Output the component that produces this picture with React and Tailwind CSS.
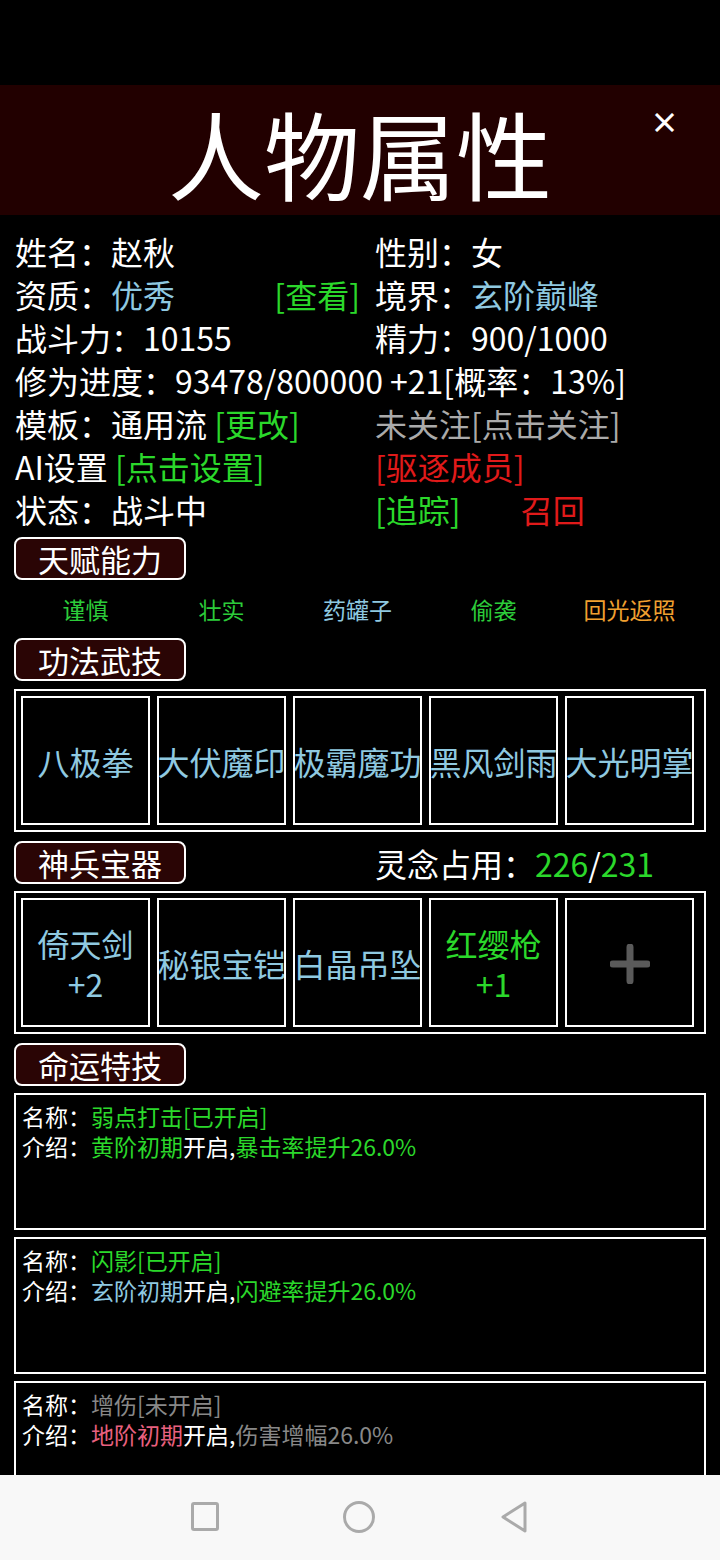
import React from 'react';

const font = { fontFamily: '"Noto Sans CJK SC", "Noto Sans", sans-serif' };

const G = 'text-[#2bd82b]';
const B = 'text-[#8fc9e0]';

function Tag({ children }) {
  return (
    <div className="w-[172px] h-[43px] rounded-[8px] border-2 border-white bg-[#2a0505] flex items-center justify-center text-[31px] leading-none text-white">
      {children}
    </div>
  );
}

function Cell({ children, className = '' }) {
  return (
    <div className={`h-[129px] border-2 border-white flex flex-col items-center justify-center text-[32px] leading-[40px] whitespace-nowrap overflow-hidden ${className}`}>
      {children}
    </div>
  );
}

function Box({ children }) {
  return (
    <div className="mx-[14px] border-2 border-white p-[5px] grid grid-cols-[repeat(5,129px)] gap-[7px]">
      {children}
    </div>
  );
}

function Card({ name, intro }) {
  return (
    <div className="mx-[14px] h-[137px] shrink-0 border-2 border-white pt-[6px] pl-[6px] text-[23px] leading-[30px] text-white">
      <div>名称：{name}</div>
      <div>介绍：{intro}</div>
    </div>
  );
}

export default function App() {
  return (
    <div className="w-[720px] h-[1560px] bg-black flex flex-col overflow-hidden" style={font}>
      <div className="flex-1 min-h-0 overflow-hidden">
        <div className="h-[85px]" />
        <div className="relative h-[130px] bg-[#220000] flex items-center justify-center">
          <span className="text-[96px] leading-none text-white pt-[4px]">人物属性</span>
          <span className="absolute left-[650px] top-[22px] text-[29px] font-bold leading-none text-white">×</span>
        </div>

        <div className="pt-[15px] px-[15px] grid grid-cols-[345px_1fr] gap-x-[15px] text-[32px] leading-[43px] text-white whitespace-nowrap">
          <div>姓名：赵秋</div>
          <div>性别：女</div>
          <div className="flex justify-between">
            <span>资质：<span className={B}>优秀</span></span>
            <span className={G}>[查看]</span>
          </div>
          <div>境界：<span className={B}>玄阶巅峰</span></div>
          <div>战斗力：10155</div>
          <div>精力：900/1000</div>
          <div className="col-span-2">修为进度：93478/800000 +21[概率：13%]</div>
          <div>模板：通用流 <span className={G}>[更改]</span></div>
          <div className="text-[#aaaaaa]">未关注[点击关注]</div>
          <div>AI设置 <span className={G}>[点击设置]</span></div>
          <div className="text-[#e01a1a]">[驱逐成员]</div>
          <div>状态：战斗中</div>
          <div>
            <span className={G}>[追踪]</span>
            <span className="ml-[60px] text-[#e01a1a]">召回</span>
          </div>
        </div>

        <div className="mt-[6px] px-[14px]">
          <Tag>天赋能力</Tag>
        </div>
        <div className="h-[58px] mx-[14px] px-[7px] grid grid-cols-[repeat(5,129px)] gap-[7px] items-center text-center text-[23px]">
          <span className="text-[#2ccc3a]">谨慎</span>
          <span className="text-[#2ccc3a]">壮实</span>
          <span className={B}>药罐子</span>
          <span className="text-[#2ccc3a]">偷袭</span>
          <span className="text-[#f0a030]">回光返照</span>
        </div>
        <div className="px-[14px]">
          <Tag>功法武技</Tag>
        </div>

        <div className="mt-[8px]">
          <Box>
            <Cell className={B}>八极拳</Cell>
            <Cell className={B}>大伏魔印</Cell>
            <Cell className={B}>极霸魔功</Cell>
            <Cell className={B}>黑风剑雨</Cell>
            <Cell className={B}>大光明掌</Cell>
          </Box>
        </div>

        <div className="mt-[9px] px-[14px] flex items-center">
          <Tag>神兵宝器</Tag>
          <div className="ml-[189px] text-[32px] leading-none text-white">
            灵念占用：<span className={G}>226</span>/<span className={G}>231</span>
          </div>
        </div>

        <div className="mt-[7px]">
          <Box>
            <Cell className={B}>
              <span>倚天剑</span>
              <span>+2</span>
            </Cell>
            <Cell className={B}>秘银宝铠</Cell>
            <Cell className={B}>白晶吊坠</Cell>
            <Cell className={G}>
              <span>红缨枪</span>
              <span>+1</span>
            </Cell>
            <Cell>
              <svg width="40" height="40" viewBox="0 0 40 40" className="mt-[2px]">
                <path d="M20 3 V37 M3 20 H37" stroke="#5a5a5a" strokeWidth="7" strokeLinecap="round" />
              </svg>
            </Cell>
          </Box>
        </div>

        <div className="mt-[9px] px-[14px]">
          <Tag>命运特技</Tag>
        </div>

        <div className="mt-[7px] flex flex-col gap-[7px]">
          <Card
            name={<span className={G}>弱点打击[已开启]</span>}
            intro={<><span className={G}>黄阶初期</span>开启,<span className={G}>暴击率提升26.0%</span></>}
          />
          <Card
            name={<span className={G}>闪影[已开启]</span>}
            intro={<><span className={B}>玄阶初期</span>开启,<span className={G}>闪避率提升26.0%</span></>}
          />
          <Card
            name={<span className="text-[#888888]">增伤[未开启]</span>}
            intro={<><span className="text-[#e8607f]">地阶初期</span>开启,<span className="text-[#888888]">伤害增幅26.0%</span></>}
          />
        </div>
      </div>

      <div className="h-[85px] shrink-0 bg-[#f8f8f8] flex items-center justify-center gap-[124px] pb-[2px]">
        <div className="w-[28px] h-[29px] rounded-[3px] border-[3px] border-[#aaaaaa]" />
        <div className="w-[32px] h-[32px] rounded-full border-[3px] border-[#aaaaaa]" />
        <svg width="30" height="34" viewBox="0 0 30 34">
          <path d="M26 3 L4 17 L26 31 Z" fill="none" stroke="#aaaaaa" strokeWidth="3" strokeLinejoin="round" />
        </svg>
      </div>
    </div>
  );
}
